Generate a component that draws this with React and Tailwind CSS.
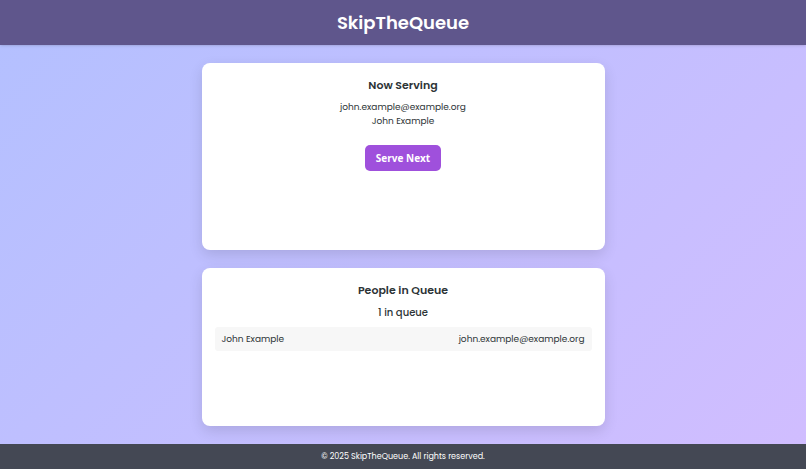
const currentPerson = { name: 'John Example', email: 'john.example@example.org' };

const queue = [{ name: 'John Example', email: 'john.example@example.org' }];

function Card({ title, className, children }) {
  return (
    <section className={`rounded-lg bg-white px-[13px] pt-[13px] text-center shadow-[0_5px_14px_rgba(0,0,0,0.12)] ${className}`}>
      <h2 className="text-[11px] leading-[18px] font-semibold">{title}</h2>
      {children}
    </section>
  );
}

export default function App() {
  return (
    <div className="flex min-h-screen flex-col bg-linear-135 from-[#b3c0ff] to-[#d1bdff] font-['Poppins','Open_Sans',sans-serif] text-[#2d3436]">
      <header className="bg-[#5f568c] py-[9px] text-center text-white shadow-sm">
        <h1 className="text-[18px] leading-[27px] font-semibold">SkipTheQueue</h1>
      </header>

      <main className="mx-auto flex w-1/2 flex-1 flex-col gap-[18px] py-[18px]">
        <Card title="Now Serving" className="min-h-[187px]">
          <div className="mt-[6px] text-[9px] leading-[14px]">
            <p>{currentPerson.email}</p>
            <p>{currentPerson.name}</p>
          </div>
          <button type="button" className="mt-[17px] rounded-[5px] bg-[#9f50dc] px-[11px] py-[5px] font-['Open_Sans','Noto_Sans',sans-serif] text-[10px] leading-4 font-bold text-white">
            Serve Next
          </button>
        </Card>

        <Card title="People in Queue" className="flex-1">
          <p className="mt-[6px] text-[10px] leading-4 font-medium">{queue.length} in queue</p>
          <ul className="mt-[6px]">
            {queue.map((person) => (
              <li key={person.email} className="flex justify-between rounded-[3px] bg-[#f7f7f7] px-[7px] py-1 text-[9px] leading-4">
                <span>{person.name}</span>
                <span>{person.email}</span>
              </li>
            ))}
          </ul>
        </Card>
      </main>

      <footer className="bg-[#444854] py-[5px] text-center text-[8px] leading-[15px] text-white">
        © 2025 SkipTheQueue. All rights reserved.
      </footer>
    </div>
  );
}
